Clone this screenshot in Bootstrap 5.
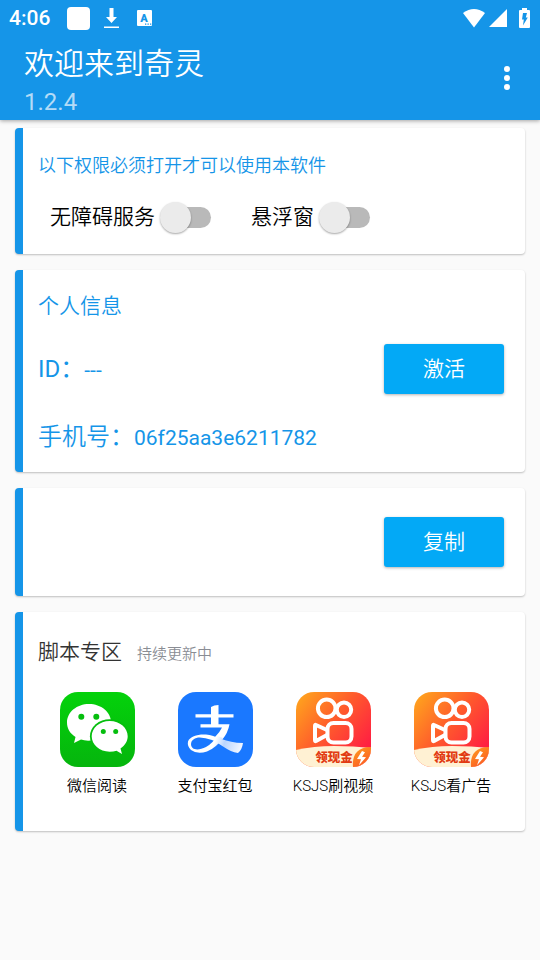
<!DOCTYPE html>
<html lang="zh-CN">
<head>
<meta charset="utf-8">
<meta name="viewport" content="width=device-width, initial-scale=1">
<title>欢迎来到奇灵</title>
<link href="https://cdn.jsdelivr.net/npm/bootstrap@5.3.0/dist/css/bootstrap.min.css" rel="stylesheet">
<style>
  :root { --brand: #1595e8; --accent: #03a9f6; }
  body {
    font-family: Roboto, "Noto Sans CJK SC", sans-serif;
    font-size: 21px;
    line-height: 32px;
    background: #fafafa;
    color: #000;
  }
  svg { display: block; flex: none; }
  .top-area { background: var(--brand); box-shadow: 0 1px 4px rgba(0, 0, 0, .35); }
  .status-row { height: 36px; padding: 0 10px 0 9px; }
  .status-left { gap: 14px; }
  .clock { font-size: 21px; font-weight: 500; width: 44px; }
  .title-row { padding: 6px 20px 2px 24px; }
  .app-title { font-size: 30px; line-height: 44px; font-weight: 350; }
  .app-version { font-size: 24px; line-height: 32px; color: #b3dbf7; }
  .menu-btn { width: 27px; height: 48px; margin-bottom: 4px; }
  .page-main { padding: 8px 15px 16px; gap: 16px; }
  .panel {
    border: 0;
    border-left: 8px solid var(--brand);
    border-radius: 4px;
    box-shadow: 0 1px 2px rgba(0, 0, 0, .24);
    padding: 0 21px 0 15px;
  }
  .panel-title { font-size: 21px; line-height: 32px; font-weight: 350; }
  .notice { font-size: 18px; line-height: 28px; font-weight: 350; }
  .brand-text { color: var(--brand); }
  .field-name { font-size: 24px; line-height: 36px; }
  .soft { font-weight: 350; }
  .perm-row { gap: 40px; padding: 5px 0 0 12px; }
  .perm { gap: 5px; }
  .switch-box.form-check-input {
    appearance: none;
    display: grid;
    align-items: center;
    width: 51px;
    height: 32px;
    margin: 0;
    border: 0;
    background: none;
    flex: none;
  }
  .switch-box::before, .switch-box::after { content: ""; grid-area: 1 / 1; }
  .switch-box::before {
    height: 21px;
    margin-left: 5px;
    border-radius: 11px;
    background: #b9b9b9;
  }
  .switch-box::after {
    width: 31px;
    height: 31px;
    border-radius: 50%;
    background: #ebebeb;
    box-shadow: 0 1px 2px rgba(0, 0, 0, .35);
  }
  .switch-box:checked::after { margin-left: 20px; background: var(--brand); }
  .action-btn {
    width: 120px;
    height: 50px;
    padding: 2px 0 0;
    border: 0;
    border-radius: 3px;
    background: var(--accent);
    color: #fff;
    font-size: 21px;
    font-weight: 350;
    box-shadow: 0 1px 3px rgba(0, 0, 0, .3);
  }
  .info-panel { padding-top: 20px; padding-bottom: 17px; }
  .id-row { margin: 22px 0 25px; }
  .perm-panel { padding-top: 24px; padding-bottom: 21px; }
  .copy-panel { padding-top: 29px; padding-bottom: 29px; }
  .script-panel { padding: 24px 15px 33px; }
  .script-head { gap: 15px; margin-bottom: 22px; }
  .script-head .panel-title { color: #333; }
  .hint { font-size: 15px; color: #8a8d94; font-weight: 350; }
  .script-link { font-size: 15px; line-height: 24px; color: #000; gap: 7px; font-weight: 350; }
</style>
<script src="https://cdn.jsdelivr.net/npm/bootstrap@5.3.0/dist/js/bootstrap.bundle.min.js"></script>
</head>
<body>
<svg width="0" height="0" class="position-absolute" aria-hidden="true">
  <defs>
    <linearGradient id="gKs" x1="0" y1="0" x2="1" y2=".8">
      <stop offset="0" stop-color="#ffab1c"/><stop offset=".5" stop-color="#ff5a2c"/><stop offset="1" stop-color="#ff1745"/>
    </linearGradient>
    <linearGradient id="gLeaf" x1="0" y1="0" x2=".6" y2="1">
      <stop offset="0" stop-color="#ffa01c"/><stop offset="1" stop-color="#fb5b26"/>
    </linearGradient>
    <linearGradient id="gWx" x1="0" y1="0" x2="0" y2="1">
      <stop offset="0" stop-color="#04d20b"/><stop offset="1" stop-color="#05b50d"/>
    </linearGradient>
    <linearGradient id="gAli" gradientUnits="userSpaceOnUse" x1="38" y1="46" x2="64" y2="56">
      <stop offset="0" stop-color="#fff"/><stop offset=".35" stop-color="#b9d5ff"/><stop offset="1" stop-color="#f4f8ff"/>
    </linearGradient>
    <clipPath id="tile"><rect width="75" height="75" rx="18"/></clipPath>
    <symbol id="ks" viewBox="0 0 75 75">
      <g clip-path="url(#tile)">
        <rect width="75" height="75" fill="url(#gKs)"/>
        <path d="M0 58Q18 54 38 54T75 56V75H0Z" fill="#fff1d3"/>
        <path d="M57 75C56 63 61 55 75 55V75Z" fill="url(#gLeaf)"/>
        <path d="M66 59l-5 8 4 .3-2 6 7-8-4-.5 3-4.500z" fill="#fff"/>
        <g fill="none" stroke="#fff" stroke-width="4" stroke-linejoin="round">
          <circle cx="30.700" cy="16.300" r="8.800"/>
          <circle cx="48" cy="17.700" r="7.200"/>
          <rect x="31.500" y="31" width="24" height="19.500" rx="6"/>
          <path d="M31 38L20 33Q19 32.500 19 34V48Q19 49.500 20 49L31 43"/>
        </g>
        <text x="38" y="70" text-anchor="middle" font-family="Noto Sans CJK SC, sans-serif" font-weight="900" font-size="12.500" fill="#e23b12">领现金</text>
      </g>
    </symbol>
  </defs>
</svg>

<header class="top-area text-white">
  <div class="status-row d-flex align-items-center">
    <div class="status-left d-flex align-items-center">
      <span class="clock">4:06</span>
      <svg width="23" height="23"><rect width="23" height="23" rx="4" fill="#fff"/></svg>
      <svg width="15" height="21" viewBox="0 0 15 21" fill="#fff"><path d="M5.500 0h4v9H13L7.500 15 2 9h3.500zM0 18.500h15v1.500H0z"/></svg>
      <svg width="20" height="16" viewBox="0 0 20 16"><rect x="4" width="15" height="16" rx="1" fill="#fff"/><text x="11" y="12" text-anchor="middle" font-family="Roboto, sans-serif" font-size="11" font-weight="900" fill="#1595e8">A</text><path d="M12 13.500h1.300v1.200H12zm2.500 0h1.300v1.200h-1.300zm2.500 0h1.300v1.200H17z" fill="#1595e8"/></svg>
    </div>
    <svg class="ms-auto" width="22" height="19" viewBox="0 0 22 19" fill="#fff"><path d="M0 4Q11-4 22 4L11 18.500Z"/></svg>
    <svg class="ms-1" width="18" height="18" viewBox="0 0 18 18" fill="#fff"><path d="M18 0V18H0Z"/></svg>
    <svg class="ms-2" width="15" height="20" viewBox="0 0 15 20"><path d="M7 0h5v2h2q1 0 1 1v16q0 1-1 1H5q-1 0-1-1V3q0-1 1-1h2z" fill="#fff"/><path d="M8 5h4l-1.200 4.500h2L8 17.500l.8-6H7z" fill="#1595e8"/></svg>
  </div>
  <div class="title-row d-flex align-items-center justify-content-between">
    <div>
      <h1 class="app-title m-0">欢迎来到奇灵</h1>
      <div class="app-version">1.2.4</div>
    </div>
    <button type="button" class="menu-btn btn p-0 border-0 d-flex align-items-center justify-content-center" aria-label="菜单">
      <svg width="6" height="24" viewBox="0 0 6 24" fill="#fff"><circle cx="3" cy="3" r="3"/><circle cx="3" cy="12" r="3"/><circle cx="3" cy="21" r="3"/></svg>
    </button>
  </div>
</header>

<main class="page-main d-flex flex-column">
  <section class="panel card perm-panel">
    <h2 class="notice brand-text mb-3">以下权限必须打开才可以使用本软件</h2>
    <div class="perm-row d-flex align-items-center flex-wrap">
      <div class="perm d-flex align-items-center">
        <label for="sw-access" class="soft">无障碍服务</label>
        <input class="switch-box form-check-input" type="checkbox" role="switch" id="sw-access">
      </div>
      <div class="perm d-flex align-items-center">
        <label for="sw-float" class="soft">悬浮窗</label>
        <input class="switch-box form-check-input" type="checkbox" role="switch" id="sw-float">
      </div>
    </div>
  </section>

  <section class="panel card info-panel brand-text">
    <h2 class="panel-title mb-0">个人信息</h2>
    <div class="id-row d-flex align-items-center justify-content-between">
      <div><span class="field-name">ID：</span><span>---</span></div>
      <button type="button" class="action-btn btn">激活</button>
    </div>
    <div><span class="field-name soft">手机号：</span><span>06f25aa3e6211782</span></div>
  </section>

  <section class="panel card copy-panel">
    <button type="button" class="action-btn btn align-self-end">复制</button>
  </section>

  <section class="panel card script-panel">
    <div class="script-head d-flex align-items-baseline">
      <h2 class="panel-title mb-0">脚本专区</h2>
      <span class="hint">持续更新中</span>
    </div>
    <div class="row row-cols-4 g-0">
      <a href="#" class="script-link col d-flex flex-column align-items-center text-decoration-none">
        <svg width="75" height="75" viewBox="0 0 75 75">
          <rect width="75" height="75" rx="18" fill="url(#gWx)"/>
          <path d="M29 12C17 12 7 20 7 30.500C7 36.500 10 41.500 15.500 45L14 51L21 47.500Q25 49 31 48.500C43 47.500 51 40 51 30C51 20 41 12 29 12Z" fill="#fff"/>
          <ellipse cx="49.700" cy="44.300" rx="19.800" ry="17" fill="#05be0d"/>
          <path d="M49.700 29C39.500 29 31.700 36 31.700 44.300S39.500 59.700 49.700 59.700Q53.500 59.700 56.500 58.700L62 62L60.500 56.500C65 53.500 67.700 49 67.700 44.300C67.700 36 60 29 49.700 29Z" fill="#fff"/>
          <g fill="#05be0d"><circle cx="21.300" cy="24.700" r="3"/><circle cx="36.300" cy="24.700" r="3"/><circle cx="43.300" cy="39.500" r="2.500"/><circle cx="55.700" cy="39.500" r="2.500"/></g>
        </svg>
        <span>微信阅读</span>
      </a>
      <a href="#" class="script-link col d-flex flex-column align-items-center text-decoration-none">
        <svg width="75" height="75" viewBox="0 0 75 75">
          <rect width="75" height="75" rx="18" fill="#1a78ff"/>
          <path d="M33 15Q36 13 40.500 13V22.300H55.500V25.500H40.500V32.300H51.500Q50 41 44 48L37 45Q42 40 44 35.500H22.500V32.300H33V25.500H17.500V22.300H33Z" fill="#fff"/>
          <path d="M28 42.500C37 43 48 51 65 51Q64 58 60 61C50 60 42 51 34 48Q26 45 20 45.500Q13 47 13 52C13 58 20 59 28 55Q35 51 39 44L45 46Q38 56 29 59.500Q19 62.500 13 58Q9 54 10 49.500C12 44 20 42 28 42.500Z" fill="url(#gAli)"/>
        </svg>
        <span>支付宝红包</span>
      </a>
      <a href="#" class="script-link col d-flex flex-column align-items-center text-decoration-none">
        <svg width="75" height="75"><use href="#ks"/></svg>
        <span>KSJS刷视频</span>
      </a>
      <a href="#" class="script-link col d-flex flex-column align-items-center text-decoration-none">
        <svg width="75" height="75"><use href="#ks"/></svg>
        <span>KSJS看广告</span>
      </a>
    </div>
  </section>
</main>
</body>
</html>
